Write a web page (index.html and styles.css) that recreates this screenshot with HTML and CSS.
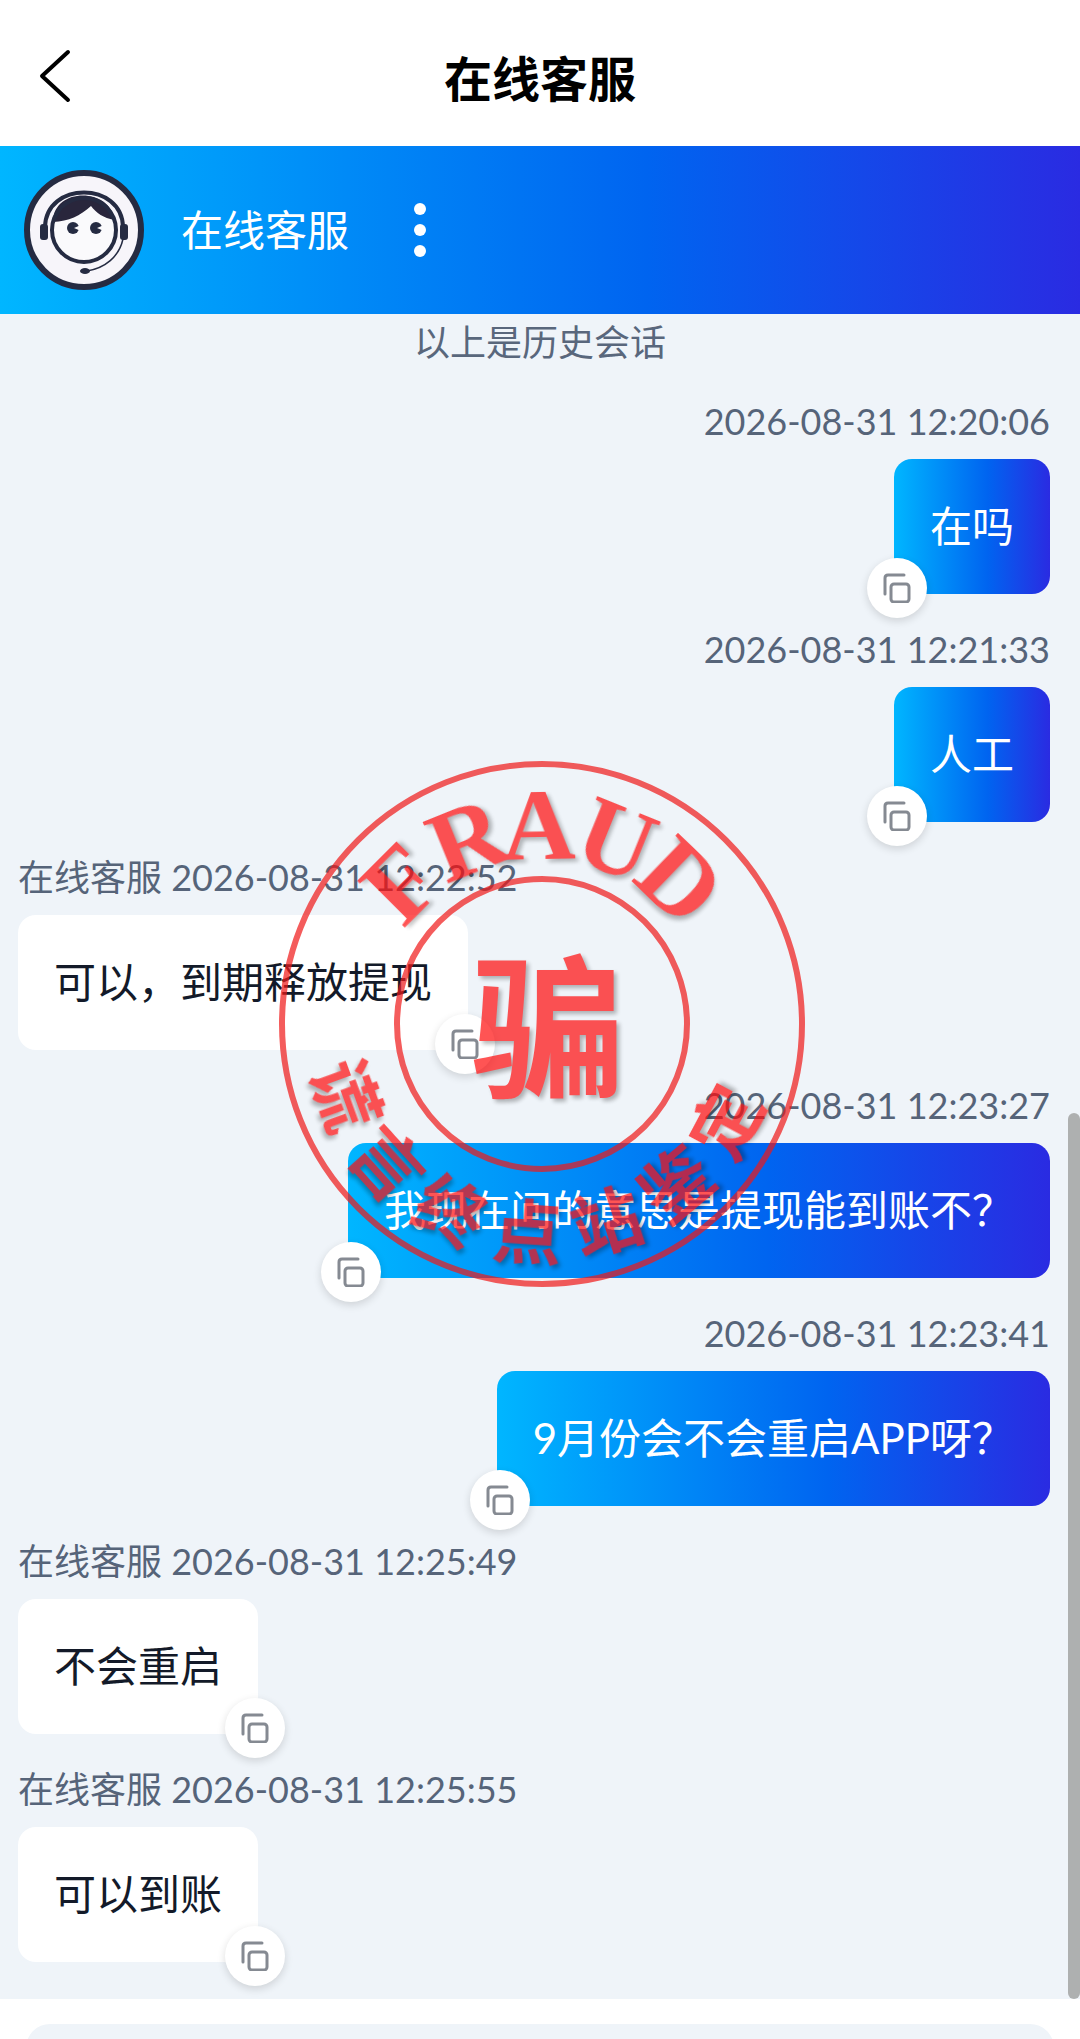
FILE: index.html
```html
<!DOCTYPE html>
<html lang="zh-CN">
<head>
    <meta charset="UTF-8">
    <meta name="viewport" content="width=device-width, initial-scale=1.0">
    <title>在线客服</title>
    <link rel="stylesheet" href="styles.css">
</head>
<body>
    <svg class="defs" aria-hidden="true">
        <symbol id="copy" viewBox="0 0 28 30">
            <path d="M2 21V5Q2 2 5 2H21"/>
            <rect x="8" y="11" width="18" height="18" rx="3"/>
        </symbol>
    </svg>
    <div class="app">
        <header class="title-bar">
            <button class="back" type="button" aria-label="返回">
                <svg width="34" height="54" viewBox="0 0 34 54"><path d="M30 3L4 27L30 51"/></svg>
            </button>
            <h1>在线客服</h1>
        </header>

        <div class="agent-bar">
            <svg class="avatar" viewBox="0 0 120 120" aria-hidden="true">
                <circle cx="60" cy="60" r="57" fill="#f7f5fa" stroke="#252b42" stroke-width="6"/>
                <path d="M21 57C22 11 98 11 99 57" fill="none" stroke="#252b42" stroke-width="4"/>
                <circle cx="59" cy="60" r="32" fill="#fafafc"/>
                <path d="M29 52C29 16 88 18 90 50C80 48 72 43 67 36C56 46 45 51 29 52Z" fill="#29263c"/>
                <circle cx="60" cy="60" r="32" fill="none" stroke="#252b42" stroke-width="4"/>
                <rect x="16" y="54" width="8" height="16" rx="3" fill="#252b42"/>
                <rect x="96" y="54" width="8" height="16" rx="3" fill="#252b42"/>
                <circle cx="49" cy="58" r="6" fill="#252b42"/>
                <circle cx="72" cy="58" r="6" fill="#252b42"/>
                <path d="M50 58L57 55V61Z M73 58L80 55V61Z" fill="#fafafc"/>
                <path d="M99 69C95 87 81 98 63 101" fill="none" stroke="#252b42" stroke-width="1.5"/>
                <ellipse cx="61" cy="101" rx="5" ry="3" fill="#252b42"/>
            </svg>
            <span class="agent-name">在线客服</span>
            <button class="more" type="button" aria-label="更多">
                <svg width="14" height="56" viewBox="0 0 14 56">
                    <circle cx="7" cy="7" r="6"/><circle cx="7" cy="28" r="6"/><circle cx="7" cy="49" r="6"/>
                </svg>
            </button>
        </div>

        <main class="chat">
            <p class="history">以上是历史会话</p>

            <div class="message sent">
                <div class="meta">2026-08-31 12:20:06</div>
                <div class="bubble">在吗<button class="copy" type="button" aria-label="复制"><svg><use href="#copy"/></svg></button></div>
            </div>
            <div class="message sent">
                <div class="meta">2026-08-31 12:21:33</div>
                <div class="bubble">人工<button class="copy" type="button" aria-label="复制"><svg><use href="#copy"/></svg></button></div>
            </div>
            <div class="message">
                <div class="meta">在线客服 2026-08-31 12:22:52</div>
                <div class="bubble">可以，到期释放提现<button class="copy" type="button" aria-label="复制"><svg><use href="#copy"/></svg></button></div>
            </div>
            <div class="message sent">
                <div class="meta">2026-08-31 12:23:27</div>
                <div class="bubble">我现在问的意思是提现能到账不？<button class="copy" type="button" aria-label="复制"><svg><use href="#copy"/></svg></button></div>
            </div>
            <div class="message sent">
                <div class="meta">2026-08-31 12:23:41</div>
                <div class="bubble">9月份会不会重启APP呀？<button class="copy" type="button" aria-label="复制"><svg><use href="#copy"/></svg></button></div>
            </div>
            <div class="message">
                <div class="meta">在线客服 2026-08-31 12:25:49</div>
                <div class="bubble">不会重启<button class="copy" type="button" aria-label="复制"><svg><use href="#copy"/></svg></button></div>
            </div>
            <div class="message">
                <div class="meta">在线客服 2026-08-31 12:25:55</div>
                <div class="bubble">可以到账<button class="copy" type="button" aria-label="复制"><svg><use href="#copy"/></svg></button></div>
            </div>

            <!-- stamp -->
            <svg class="stamp" viewBox="-265 -265 530 530">
                <circle r="260"/>
                <circle r="145"/>
                <g class="stamp-en">
                    <text y="-165" transform="rotate(-45)">F</text>
                    <text y="-165" transform="rotate(-22)">R</text>
                    <text y="-165" transform="rotate(-1)">A</text>
                    <text y="-165" transform="rotate(22)">U</text>
                    <text y="-165" transform="rotate(44)">D</text>
                </g>
                <text class="stamp-main" x="6" y="62">骗</text>
                <g class="stamp-cn">
                    <text y="235" transform="rotate(70)">谎</text>
                    <text y="235" transform="rotate(48)">言</text>
                    <text y="235" transform="rotate(26)">终</text>
                    <text y="235" transform="rotate(4)">点</text>
                    <text y="235" transform="rotate(-18)">站</text>
                    <text y="235" transform="rotate(-40)">鉴</text>
                    <text y="235" transform="rotate(-62)">定</text>
                </g>
            </svg>
            <div class="scroll-thumb"></div>
        </main>

        <footer class="composer">
            <input type="text" aria-label="输入消息">
        </footer>
    </div>
</body>
</html>
```
FILE: styles.css
```css
* {
    box-sizing: border-box;
}
body {
    margin: 0;
    background: white;
    font-family: Lato, "Noto Sans CJK SC", sans-serif;
    color: #131a29;
}
button {
    padding: 0;
    border: none;
    background: none;
    cursor: pointer;
}
svg {
    display: block;
}
.defs {
    position: absolute;
    width: 0;
    height: 0;
}
.app {
    display: flex;
    flex-direction: column;
    height: 100vh;
    overflow: hidden;
}
.title-bar {
    display: grid;
    grid-template-columns: 72px 1fr 72px;
    align-items: center;
    flex: none;
    height: 146px;
    padding-top: 12px;
}
.title-bar h1 {
    margin: 0;
    font-size: 48px;
    line-height: 64px;
    text-align: center;
    color: black;
}
.back {
    justify-self: end;
    margin-bottom: 6px;
}
.back svg {
    fill: none;
    stroke: black;
    stroke-width: 4;
    stroke-linecap: round;
    stroke-linejoin: round;
}
.agent-bar {
    display: flex;
    align-items: center;
    flex: none;
    height: 168px;
    padding: 0 24px;
    background: linear-gradient(90deg, #00b6ff, #0064f0 60%, #2a2be2);
}
.avatar {
    width: 120px;
    height: 120px;
}
.agent-name {
    margin: 0 64px 0 37px;
    font-size: 42px;
    line-height: 64px;
    color: white;
}
.more svg {
    fill: white;
}
.chat {
    position: relative;
    display: flex;
    flex-direction: column;
    flex: none;
    gap: 31px;
    padding: 4px 30px 37px 18px;
    background: #eff4f9;
}
.history {
    margin: 0 -12px 0 0;
    font-size: 36px;
    line-height: 48px;
    text-align: center;
    color: #59677c;
}
.message {
    display: flex;
    flex-direction: column;
    align-items: flex-start;
}
.sent {
    align-items: flex-end;
}
.meta {
    margin-bottom: 14px;
    font-size: 36px;
    line-height: 48px;
    color: #566479;
}
.bubble {
    position: relative;
    padding: 36px;
    border-radius: 18px;
    background: white;
    font-size: 42px;
    line-height: 63px;
}
.sent .bubble {
    background: linear-gradient(90deg, #00b6ff, #0064f0 60%, #2a2be2);
    color: white;
}
.copy {
    position: absolute;
    right: -27px;
    bottom: -24px;
    display: flex;
    align-items: center;
    justify-content: center;
    width: 60px;
    height: 60px;
    border-radius: 50%;
    background: white;
    box-shadow: 0 3px 9px rgba(0, 0, 0, 0.14);
}
.sent .copy {
    right: auto;
    left: -27px;
}
.copy svg {
    width: 28px;
    height: 30px;
    fill: none;
    stroke: #858a92;
    stroke-width: 3;
    stroke-linecap: round;
}
.stamp {
    position: absolute;
    top: 445px;
    left: 50%;
    width: 530px;
    height: 530px;
    margin-left: -263px;
    opacity: 0.7;
    fill: #ff0c0c;
    font-weight: bold;
    text-anchor: middle;
    pointer-events: none;
}
.stamp circle {
    fill: none;
    stroke: #f01818;
    stroke-width: 6;
}
.stamp text {
    filter: drop-shadow(3px 3px 2px rgba(0, 0, 0, 0.4));
}
.stamp-en {
    font-family: "Liberation Serif", serif;
    font-size: 102px;
}
.stamp-main {
    font-family: "Noto Sans CJK SC", sans-serif;
    font-size: 154px;
}
.stamp-cn {
    font-family: "Noto Sans CJK SC", sans-serif;
    font-size: 70px;
}
.scroll-thumb {
    position: absolute;
    right: 0;
    bottom: 0;
    width: 12px;
    height: 886px;
    border-radius: 6px;
    background: #aeb0b0;
}
.composer {
    flex: none;
    padding: 25px 26px;
    background: white;
}
.composer input {
    width: 100%;
    height: 96px;
    padding: 0 30px;
    border: none;
    border-radius: 24px;
    background: #eff4f9;
    font-size: 42px;
}
```
